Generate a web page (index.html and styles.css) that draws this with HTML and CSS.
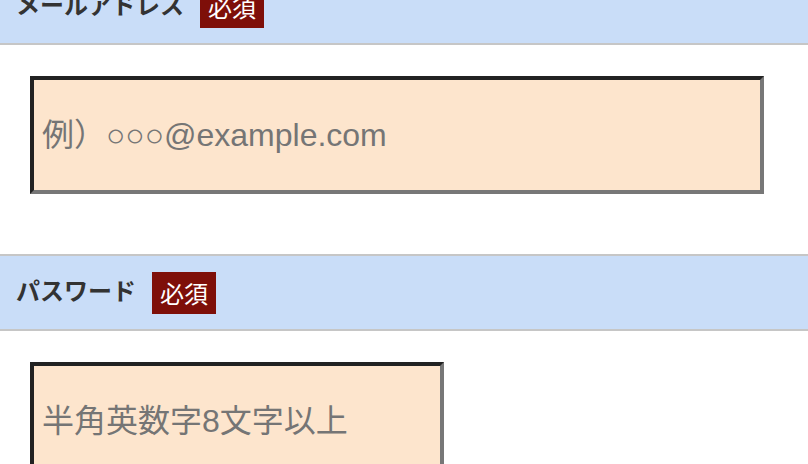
FILE: index.html
```html
<!DOCTYPE html>
<html lang="ja">
<head>
<meta charset="utf-8">
<title>フォーム</title>
<link rel="stylesheet" href="styles.css">
</head>
<body>
<form class="form">
  <div class="label-bar">
    <span class="label-text">メールアドレス</span>
    <span class="badge">必須</span>
  </div>
  <div class="field">
    <input class="input input-wide" type="email" placeholder="例）○○○@example.com">
  </div>
  <div class="label-bar">
    <span class="label-text">パスワード</span>
    <span class="badge">必須</span>
  </div>
  <div class="field">
    <input class="input input-narrow" type="password" placeholder="半角英数字8文字以上">
  </div>
</form>
</body>
</html>
```

FILE: styles.css
```css
html, body {
  margin: 0;
  padding: 0;
  background: #ffffff;
  overflow: hidden;
}

body {
  font-family: "Liberation Sans", "Noto Sans CJK JP", sans-serif;
}

.form {
  margin-top: -32px;
}

.label-bar {
  display: flex;
  align-items: center;
  gap: 16px;
  background: #c9ddf8;
  border-top: 2px solid #c6c6c6;
  border-bottom: 2px solid #c6c6c6;
  padding: 16px 16px 15px;
}

.label-text {
  font-family: "Noto Sans CJK JP", sans-serif;
  font-weight: 700;
  font-size: 24px;
  color: #333333;
  line-height: 1;
  margin-bottom: 6px;
}

.badge {
  display: inline-block;
  background: #7e0f09;
  color: #ffffff;
  font-family: "Noto Sans CJK JP", sans-serif;
  font-size: 24px;
  line-height: 42px;
  height: 42px;
  padding: 0 8px;
}

.field {
  padding: 31px 30px 60px;
}

.input {
  display: block;
  box-sizing: border-box;
  height: 118px;
  margin: 0;
  padding: 0 8px;
  background: #fde5cd;
  border-style: solid;
  border-width: 4px;
  border-color: #222222 #777777 #777777 #222222;
  font-family: "Liberation Sans", "Noto Sans CJK JP", sans-serif;
  font-size: 32px;
  color: #333333;
  outline: none;
}

.input::placeholder {
  color: #757575;
  opacity: 1;
}

.input-wide {
  width: 734px;
}

.input-narrow {
  width: 414px;
}
```
